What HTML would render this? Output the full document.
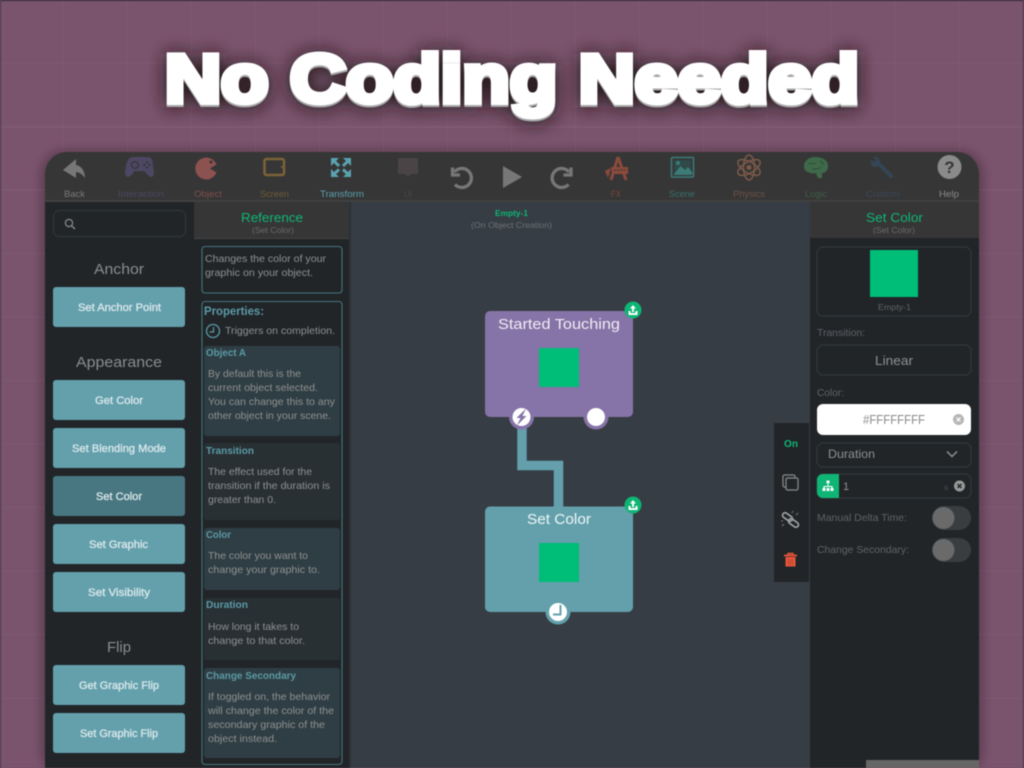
<!DOCTYPE html>
<html><head><meta charset="utf-8">
<style>
html,body{margin:0;padding:0;width:1024px;height:768px;overflow:hidden;background:#7a536c}
svg{display:block;filter:blur(.4px)}
text{font-family:"Liberation Sans",sans-serif;white-space:pre}
.tb{font-size:9.5px}
.body{font-size:10.5px;fill:#8f9192}
.head{font-size:10.5px;font-weight:bold;fill:#5b9aa6}
.btn{font-size:11px;fill:#dce9ec;stroke:#dce9ec;stroke-width:.3px}
.sec{font-size:15px;fill:#8c8c8c}
.lab{font-size:10.5px;fill:#5f6366}
</style></head><body>
<svg width="1024" height="768" viewBox="0 0 1024 768" xmlns="http://www.w3.org/2000/svg">
<defs>
<pattern id="g" width="64" height="63.500" patternUnits="userSpaceOnUse" x="0" y="0">
<path d="M63.500 0V63.500M0 63H64" stroke="#8a6380" stroke-width="1" fill="none" opacity=".35"/>
</pattern>
<filter id="sh" x="-20%" y="-60%" width="140%" height="220%"><feGaussianBlur stdDeviation="9"/></filter>
<filter id="ws" x="-5%" y="-5%" width="110%" height="110%"><feGaussianBlur stdDeviation="5"/></filter>
</defs>
<rect width="1024" height="768" fill="#7a536c"/>
<rect width="1024" height="768" fill="url(#g)"/>
<path d="M0 127H1024M0 190H1024" stroke="#8a6380" stroke-width="1" opacity=".5"/>
<rect width="1024" height="1" fill="#2d2530"/>
<rect width="1" height="768" fill="#4c3848"/>
<rect x="1023" width="1" height="768" fill="#4c3848"/>

<!-- title -->
<text x="165" y="104" font-size="68" font-weight="bold" textLength="694" lengthAdjust="spacingAndGlyphs" stroke="#1c1218" stroke-width="7" fill="#1c1218" filter="url(#sh)">No Coding Needed</text>
<text x="165" y="104" font-size="68" font-weight="bold" textLength="694" lengthAdjust="spacingAndGlyphs" stroke="#a9a9a9" stroke-width="6" fill="#a9a9a9">No Coding Needed</text>
<text x="165" y="102" font-size="68" font-weight="bold" textLength="694" lengthAdjust="spacingAndGlyphs" stroke="#fff" stroke-width="6" fill="#fff">No Coding Needed</text>

<!-- window -->
<rect x="41" y="150" width="942" height="625" rx="24" fill="#000" opacity=".25" filter="url(#ws)"/>
<path d="M45 768V174a22 22 0 0 1 22-22H957a22 22 0 0 1 22 22V768Z" fill="#363636"/>
<rect x="45" y="200" width="934" height="2" fill="#414141"/>
<rect x="45" y="202" width="149" height="566" fill="#212528"/>
<rect x="194" y="202" width="157" height="566" fill="#212528"/>
<rect x="194" y="202" width="155" height="36" fill="#363636"/>
<rect x="194" y="238" width="155" height="1" fill="#444"/>
<rect x="349" y="202" width="2" height="566" fill="#2c3135"/>
<rect x="351" y="202" width="459" height="566" fill="#363d44"/>
<rect x="810" y="202" width="169" height="566" fill="#212528"/>
<rect x="810" y="202" width="169" height="36" fill="#363636"/>
<rect x="866" y="760" width="113" height="8" fill="#666"/>

<!-- toolbar icons -->
<path d="M63 170 76 159V165C82 166 85 172 85 178 82 174 79 172 76 172V178Z" fill="#777"/>
<path d="M134 157h13c4 0 6 2 6 9l1 6c0 3-1 5-3 5-3 0-5-5-7-6h-9c-2 1-4 6-7 6-2 0-3-2-3-5l1-6c1-7 4-9 8-9Z" fill="#4d4763"/>
<circle cx="135" cy="165" r="3.500" fill="none" stroke="#363636" stroke-width="1.300"/>
<circle cx="147" cy="162.500" r="1.100" fill="#363636"/><circle cx="147" cy="167.500" r="1.100" fill="#363636"/><circle cx="144.500" cy="165" r="1.100" fill="#363636"/><circle cx="149.500" cy="165" r="1.100" fill="#363636"/>
<path d="M216.500 164.500A11 11 0 1 0 216.500 172.500L210 168.500Z" fill="#8c524f"/><circle cx="211" cy="162" r="1.500" fill="#363636"/>
<rect x="264.500" y="159" width="19.500" height="16" rx="2" fill="none" stroke="#7c6338" stroke-width="2.500"/><rect x="281" y="166" width="1.500" height="2" fill="#7c6338"/>
<g fill="#5aa2b0"><path d="M331 158H339L331 166Z M351 158H343L351 166Z M331 177H339L331 169Z M351 177H343L351 169Z"/></g>
<path d="M334 161 339 166M348 161 343 166M334 174 339 169.500M348 174 343 169.500" stroke="#5aa2b0" stroke-width="3" fill="none"/>
<path d="M399 158h18a1 1 0 0 1 1 1v14a1 1 0 0 1-1 1h-6l-3 3-3-3h-6a1 1 0 0 1-1-1v-14a1 1 0 0 1 1-1Z" fill="#4a4446"/>
<g fill="none" stroke="#777" stroke-width="3.300"><path d="M454.500 172A9.500 9.500 0 1 1 455 184.500"/><path d="M452.500 167.500V175H460"/></g>
<path d="M503 166 522 177 503 188Z" fill="#777"/>
<g fill="none" stroke="#777" stroke-width="3.300" transform="translate(1023.500 0) scale(-1 1)"><path d="M454.500 172A9.500 9.500 0 1 1 455 184.500"/><path d="M452.500 167.500V175H460"/></g>
<path d="M618 157 611 180M618 157 626 180" stroke="#8b4a3c" stroke-width="3" fill="none"/>
<path d="M611 167H628V174H612Z" fill="#8b4a3c"/><path d="M614 170H626" stroke="#363636" stroke-width="1" stroke-dasharray="2 1"/>
<path d="M605 171 611 168 608 178Z" fill="#8b4a3c"/>
<rect x="671.500" y="157.500" width="22" height="19.500" rx="1" fill="none" stroke="#3b7c78" stroke-width="1.500"/>
<rect x="674" y="160" width="17" height="15" fill="#2f4a48"/>
<path d="M673.500 175 680.500 166 685 170 688 167 692 172V175Z" fill="#3b7c78"/><circle cx="678" cy="163" r="2" fill="#3b7c78"/>
<g fill="none" stroke="#7d5a48" stroke-width="1.500"><ellipse cx="749" cy="167.500" rx="12.500" ry="5.500" transform="rotate(30 749 167.500)"/><ellipse cx="749" cy="167.500" rx="12.500" ry="5.500" transform="rotate(90 749 167.500)"/><ellipse cx="749" cy="167.500" rx="12.500" ry="5.500" transform="rotate(150 749 167.500)"/></g><circle cx="749" cy="167.500" r="2.500" fill="#7d5a48"/>
<path d="M815 157c7 0 13 3 13 9 0 5-3 7-6 7l0 5h-4l-2-5c-3 1-6 0-8-1-3-1-4-3-4-6 0-5 5-9 11-9Z" fill="#3f6a4a"/>
<path d="M808 164c3-2 5 1 8-1M812 170c3-2 6 0 9-3M820 161c2 1 3 2 4 4" fill="none" stroke="#2f4c38" stroke-width="1"/>
<path d="M878 163 891 176" stroke="#344555" stroke-width="4" stroke-linecap="round"/>
<path d="M873 157c4-1 7 2 7 5 0 3-3 6-6 5-2 0-4-3-3-7l3 2 2-2Z" fill="#344555"/>
<circle cx="949.500" cy="167" r="12" fill="#8a8a8a"/>
<text x="949.500" y="173" font-size="17" font-weight="bold" fill="#363636" text-anchor="middle">?</text>

<!-- toolbar labels -->
<text class="tb" x="64" y="197" fill="#7a7a7a" textLength="21" lengthAdjust="spacingAndGlyphs">Back</text>
<text class="tb" x="118" y="197" fill="#4d4763" textLength="46" lengthAdjust="spacingAndGlyphs">Interaction</text>
<text class="tb" x="194" y="197" fill="#7d4e4c" textLength="28" lengthAdjust="spacingAndGlyphs">Object</text>
<text class="tb" x="260" y="197" fill="#6f5a36" textLength="29" lengthAdjust="spacingAndGlyphs">Screen</text>
<text class="tb" x="320" y="197" fill="#5aa2b0" textLength="44" lengthAdjust="spacingAndGlyphs">Transform</text>
<text class="tb" x="404" y="197" fill="#4a4648" textLength="8" lengthAdjust="spacingAndGlyphs">UI</text>
<text class="tb" x="611" y="197" fill="#7a4538" textLength="10" lengthAdjust="spacingAndGlyphs">FX</text>
<text class="tb" x="669" y="197" fill="#36706c" textLength="26" lengthAdjust="spacingAndGlyphs">Scene</text>
<text class="tb" x="733" y="197" fill="#6d5244" textLength="32" lengthAdjust="spacingAndGlyphs">Physics</text>
<text class="tb" x="805" y="197" fill="#3c5f46" textLength="22" lengthAdjust="spacingAndGlyphs">Logic</text>
<text class="tb" x="866" y="197" fill="#3a4858" textLength="34" lengthAdjust="spacingAndGlyphs">Custom</text>
<text class="tb" x="939" y="197" fill="#8a8a8a" textLength="20" lengthAdjust="spacingAndGlyphs">Help</text>

<!-- left panel -->
<rect x="53.500" y="210.500" width="132" height="26" rx="6" fill="none" stroke="#33383b"/>
<circle cx="69" cy="223" r="3.600" fill="none" stroke="#8a8a8a" stroke-width="1.200"/><path d="M71.800 226 75 229" stroke="#8a8a8a" stroke-width="1.400"/>
<text class="sec" x="94" y="274" textLength="50" lengthAdjust="spacingAndGlyphs">Anchor</text>
<text class="sec" x="76" y="367" textLength="86" lengthAdjust="spacingAndGlyphs">Appearance</text>
<text class="sec" x="107" y="652" textLength="24" lengthAdjust="spacingAndGlyphs">Flip</text>
<g fill="#63a0ac">
<rect x="53" y="287" width="132" height="40" rx="3"/>
<rect x="53" y="380" width="132" height="40" rx="3"/>
<rect x="53" y="428" width="132" height="40" rx="3"/>
<rect x="53" y="476" width="132" height="40" rx="3" fill="#497781"/>
<rect x="53" y="524" width="132" height="40" rx="3"/>
<rect x="53" y="572" width="132" height="40" rx="3"/>
<rect x="53" y="665" width="132" height="40" rx="3"/>
<rect x="53" y="713" width="132" height="40" rx="3"/>
</g>
<text class="btn" x="78" y="311" textLength="83" lengthAdjust="spacingAndGlyphs">Set Anchor Point</text>
<text class="btn" x="95" y="404" textLength="48" lengthAdjust="spacingAndGlyphs">Get Color</text>
<text class="btn" x="72" y="452" textLength="94" lengthAdjust="spacingAndGlyphs">Set Blending Mode</text>
<text class="btn" x="96" y="500" textLength="46" lengthAdjust="spacingAndGlyphs">Set Color</text>
<text class="btn" x="89" y="548" textLength="59" lengthAdjust="spacingAndGlyphs">Set Graphic</text>
<text class="btn" x="88" y="596" textLength="62" lengthAdjust="spacingAndGlyphs">Set Visibility</text>
<text class="btn" x="79" y="689" textLength="80" lengthAdjust="spacingAndGlyphs">Get Graphic Flip</text>
<text class="btn" x="80" y="737" textLength="78" lengthAdjust="spacingAndGlyphs">Set Graphic Flip</text>

<!-- reference panel -->
<text x="241" y="222" font-size="13" fill="#0fb574" textLength="62" lengthAdjust="spacingAndGlyphs">Reference</text>
<text x="252" y="233" font-size="8.500" fill="#6a6a6a" textLength="42" lengthAdjust="spacingAndGlyphs">(Set Color)</text>
<rect x="202" y="246.500" width="140" height="46.500" rx="3" fill="none" stroke="#44767f" stroke-width="1.100"/>
<text class="body" x="205" y="262" textLength="121" lengthAdjust="spacingAndGlyphs">Changes the color of your</text>
<text class="body" x="205" y="276" textLength="108" lengthAdjust="spacingAndGlyphs">graphic on your object.</text>
<rect x="202" y="301.500" width="140" height="463" rx="3" fill="none" stroke="#44767f" stroke-width="1.100"/>
<text x="204" y="315" font-size="11.500" font-weight="bold" fill="#5b9aa6" textLength="60" lengthAdjust="spacingAndGlyphs">Properties:</text>
<circle cx="213" cy="331" r="6.500" fill="none" stroke="#5b9aa6" stroke-width="1.300"/><path d="M213.500 327V332H209.500" fill="none" stroke="#5b9aa6" stroke-width="1.200"/>
<text class="body" x="225" y="334" textLength="110" lengthAdjust="spacingAndGlyphs">Triggers on completion.</text>
<rect x="204" y="346" width="136" height="90" rx="3" fill="#2f3e44"/>
<rect x="204" y="443" width="136" height="77" rx="3" fill="#283034"/>
<rect x="204" y="528" width="136" height="62" rx="3" fill="#2f3e44"/>
<rect x="204" y="598" width="136" height="62" rx="3" fill="#283034"/>
<rect x="204" y="668" width="136" height="90" rx="3" fill="#2f3e44"/>
<text class="head" x="206" y="356" textLength="40" lengthAdjust="spacingAndGlyphs">Object A</text>
<text class="body" x="208" y="377" textLength="93" lengthAdjust="spacingAndGlyphs">By default this is the</text>
<text class="body" x="208" y="391" textLength="110" lengthAdjust="spacingAndGlyphs">current object selected.</text>
<text class="body" x="208" y="405" textLength="127" lengthAdjust="spacingAndGlyphs">You can change this to any</text>
<text class="body" x="208" y="419" textLength="123" lengthAdjust="spacingAndGlyphs">other object in your scene.</text>
<text class="head" x="206" y="454" textLength="48" lengthAdjust="spacingAndGlyphs">Transition</text>
<text class="body" x="208" y="475" textLength="104" lengthAdjust="spacingAndGlyphs">The effect used for the</text>
<text class="body" x="208" y="489" textLength="122" lengthAdjust="spacingAndGlyphs">transition if the duration is</text>
<text class="body" x="208" y="503" textLength="68" lengthAdjust="spacingAndGlyphs">greater than 0.</text>
<text class="head" x="206" y="538" textLength="25" lengthAdjust="spacingAndGlyphs">Color</text>
<text class="body" x="208" y="559" textLength="100" lengthAdjust="spacingAndGlyphs">The color you want to</text>
<text class="body" x="208" y="573" textLength="112" lengthAdjust="spacingAndGlyphs">change your graphic to.</text>
<text class="head" x="206" y="608" textLength="42" lengthAdjust="spacingAndGlyphs">Duration</text>
<text class="body" x="208" y="630" textLength="91" lengthAdjust="spacingAndGlyphs">How long it takes to</text>
<text class="body" x="208" y="644" textLength="97" lengthAdjust="spacingAndGlyphs">change to that color.</text>
<text class="head" x="206" y="679" textLength="90" lengthAdjust="spacingAndGlyphs">Change Secondary</text>
<text class="body" x="208" y="700" textLength="122" lengthAdjust="spacingAndGlyphs">If toggled on, the behavior</text>
<text class="body" x="208" y="714" textLength="126" lengthAdjust="spacingAndGlyphs">will change the color of the</text>
<text class="body" x="208" y="728" textLength="117" lengthAdjust="spacingAndGlyphs">secondary graphic of the</text>
<text class="body" x="208" y="742" textLength="69" lengthAdjust="spacingAndGlyphs">object instead.</text>

<!-- canvas -->
<text x="495" y="216" font-size="8" font-weight="bold" fill="#0fb574" textLength="33" lengthAdjust="spacingAndGlyphs">Empty-1</text>
<text x="471" y="228" font-size="8.500" fill="#6c7277" textLength="81" lengthAdjust="spacingAndGlyphs">(On Object Creation)</text>

<path d="M522 425V465.500H558.500V507" fill="none" stroke="#63a0ac" stroke-width="9.500"/>
<rect x="485" y="311" width="148" height="106" rx="5" fill="#8673a7"/>
<text x="498" y="329" font-size="14.500" fill="#f0edf5" textLength="122" lengthAdjust="spacingAndGlyphs">Started Touching</text>
<rect x="539" y="348" width="40" height="39" fill="#00bd78"/>
<circle cx="521.500" cy="417" r="12.500" fill="#8673a7"/><circle cx="521.500" cy="417" r="9" fill="#fff"/>
<path d="M526 408.500 516.500 418H520.500L517 425.500 526.500 416H522.500Z" fill="#8673a7"/>
<circle cx="596" cy="417" r="12.500" fill="#8673a7"/><circle cx="596" cy="417" r="9" fill="#fff"/>
<rect x="485" y="506.500" width="148" height="105.500" rx="5" fill="#63a0ac"/>
<text x="527" y="524" font-size="14.500" fill="#eef6f7" textLength="64" lengthAdjust="spacingAndGlyphs">Set Color</text>
<rect x="539" y="543" width="40" height="39" fill="#00bd78"/>
<circle cx="558" cy="612" r="12.500" fill="#63a0ac"/><circle cx="558" cy="612" r="9" fill="#fff"/>
<path d="M560.500 605V614.500H553" fill="none" stroke="#63a0ac" stroke-width="2"/>
<circle cx="633" cy="310" r="8.500" fill="#0fb574"/><path d="M633 305 636 308.500H634V312H632V308.500H630ZM628.500 311H630.500V313H635.500V311H637.500V315H628.500Z" fill="#fff"/>
<circle cx="633" cy="505" r="8.500" fill="#0fb574"/><path d="M633 500 636 503.500H634V507H632V503.500H630ZM628.500 506H630.500V508H635.500V506H637.500V510H628.500Z" fill="#fff"/>

<!-- side tools -->
<rect x="774" y="423" width="35" height="159" fill="#212528"/>
<text x="784" y="447" font-size="10" font-weight="bold" fill="#0fb574" textLength="14" lengthAdjust="spacingAndGlyphs">On</text>
<rect x="786" y="478" width="12" height="12" rx="1.500" fill="none" stroke="#8a8a8a" stroke-width="1.200"/>
<path d="M786 487H784.500A1.500 1.500 0 0 1 783 485.500V476.500A1.500 1.500 0 0 1 784.500 475H793.500A1.500 1.500 0 0 1 795 476.500V478" fill="none" stroke="#8a8a8a" stroke-width="1.200"/>
<rect x="-5.500" y="-2.500" width="11" height="5" rx="2.500" transform="translate(787.500 517) rotate(35)" fill="none" stroke="#a0a0a0" stroke-width="1.700"/>
<rect x="-5.500" y="-2.500" width="11" height="5" rx="2.500" transform="translate(793.500 523) rotate(35)" fill="none" stroke="#a0a0a0" stroke-width="1.700"/>
<path d="M784 524 782 526M783 521 781 521M796 515 798 513M792 513 793 511" stroke="#777" stroke-width="1"/>
<path d="M784 555.500H797" stroke="#e8553a" stroke-width="1.800"/><path d="M788 555V553.500H793V555" fill="none" stroke="#e8553a" stroke-width="1.400"/>
<path d="M785.500 557H795.500V566.500H785.500Z" fill="#e8553a"/>
<path d="M788.500 559V565M790.500 559V565M792.500 559V565" stroke="#a8452f" stroke-width=".8"/>

<!-- right panel -->
<text x="866" y="222" font-size="13" fill="#0fb574" textLength="57" lengthAdjust="spacingAndGlyphs">Set Color</text>
<text x="873" y="233" font-size="8.500" fill="#6a6a6a" textLength="42" lengthAdjust="spacingAndGlyphs">(Set Color)</text>
<rect x="817" y="247" width="154" height="69" rx="6" fill="none" stroke="#33383b" stroke-width="1.200"/>
<rect x="870" y="250" width="48" height="47" fill="#00bd78"/>
<text x="878" y="310" font-size="8.500" fill="#5f6366" textLength="33" lengthAdjust="spacingAndGlyphs">Empty-1</text>
<text class="lab" x="817" y="336" textLength="48" lengthAdjust="spacingAndGlyphs">Transition:</text>
<rect x="817" y="345" width="154" height="30" rx="6" fill="none" stroke="#33383b" stroke-width="1.200"/>
<text x="875" y="365" font-size="13" fill="#8f9192" textLength="38" lengthAdjust="spacingAndGlyphs">Linear</text>
<text class="lab" x="817" y="396" textLength="27" lengthAdjust="spacingAndGlyphs">Color:</text>
<rect x="817" y="404" width="154" height="31" rx="6" fill="#fff"/>
<text x="863" y="424" font-size="12.500" fill="#8a8a8a" textLength="62" lengthAdjust="spacingAndGlyphs">#FFFFFFFF</text>
<circle cx="958.500" cy="419.500" r="5.500" fill="#b5b5b5"/><path d="M956.500 417.500 960.500 421.500M960.500 417.500 956.500 421.500" stroke="#fff" stroke-width="1.200"/>
<rect x="817" y="443" width="154" height="24" rx="6" fill="none" stroke="#33383b" stroke-width="1.200"/>
<text x="828" y="458" font-size="12" fill="#8f9192" textLength="47" lengthAdjust="spacingAndGlyphs">Duration</text>
<path d="M947 451.500 952 456.500 957 451.500" fill="none" stroke="#8f9192" stroke-width="1.500"/>
<rect x="817" y="474" width="154" height="24" rx="6" fill="none" stroke="#33383b" stroke-width="1.200"/>
<path d="M823 474H839V498H823A6 6 0 0 1 817 492V480A6 6 0 0 1 823 474Z" fill="#0fb574"/>
<path d="M826.500 480.500h3v3h-3ZM822.500 488h3v3h-3ZM826.500 488h3v3h-3ZM830.500 488h3v3h-3ZM827.500 484h1v2h4v2h-1v-1h-7v1h-1v-2h4Z" fill="#fff"/>
<text x="843" y="490" font-size="11" fill="#8f9192">1</text>
<text x="944" y="490" font-size="8" fill="#4a4e50">s</text>
<circle cx="959.500" cy="486" r="5.500" fill="#999"/><path d="M957.500 484 961.500 488M961.500 484 957.500 488" stroke="#212528" stroke-width="1.400"/>
<text class="lab" x="817" y="521" textLength="90" lengthAdjust="spacingAndGlyphs">Manual Delta Time:</text>
<text class="lab" x="817" y="553" textLength="92" lengthAdjust="spacingAndGlyphs">Change Secondary:</text>
<rect x="932" y="506" width="39" height="24" rx="12" fill="#3a3d40"/><circle cx="943.500" cy="518" r="11" fill="#6a6a6a"/>
<rect x="932" y="538" width="39" height="24" rx="12" fill="#3a3d40"/><circle cx="943.500" cy="550" r="11" fill="#6a6a6a"/>
</svg>
</body></html>
